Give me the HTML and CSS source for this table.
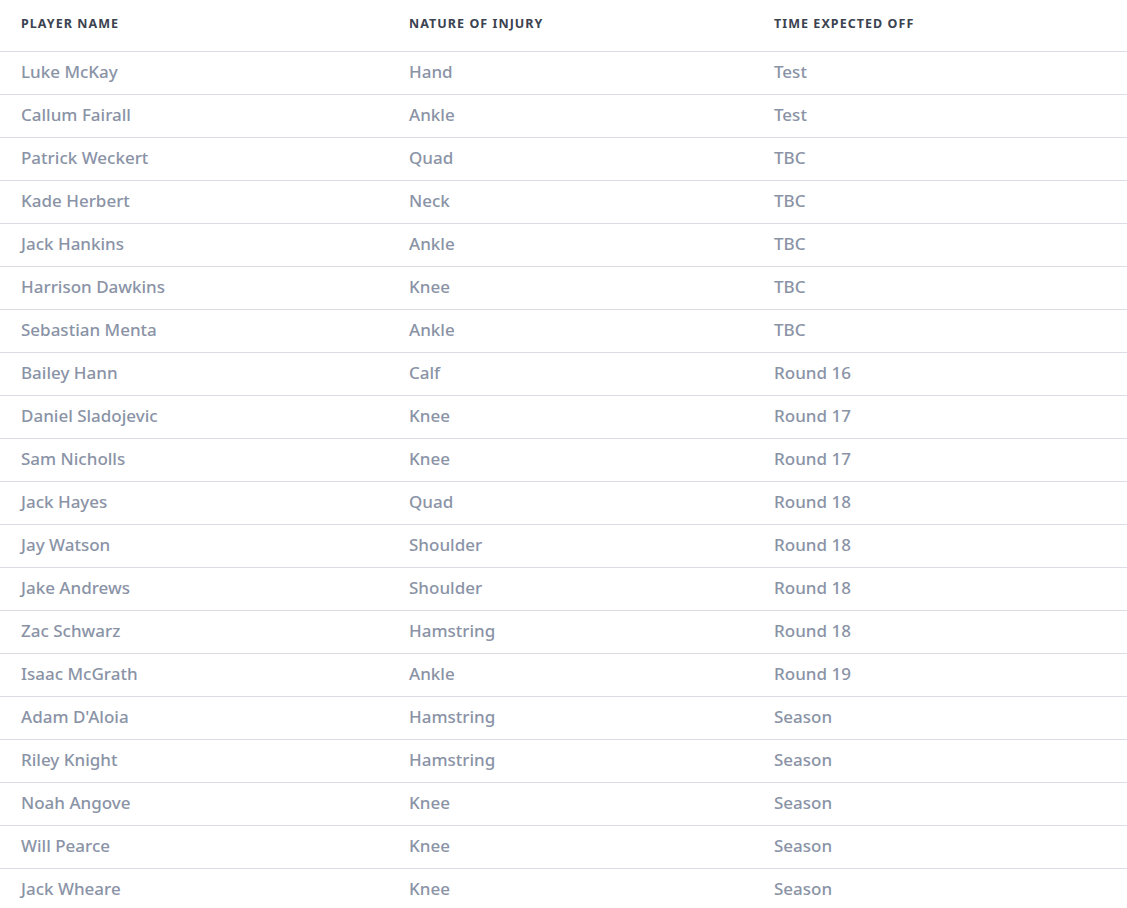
FILE: index.html
```html
<!DOCTYPE html>
<html>
<head>
<meta charset="utf-8">
<link rel="stylesheet" href="styles.css">
</head>
<body>
<div class="injury-table">
  <div class="row head">
    <div class="cell">Player Name</div>
    <div class="cell">Nature of Injury</div>
    <div class="cell">Time Expected Off</div>
  </div>
  <div class="row"><div class="cell">Luke McKay</div><div class="cell">Hand</div><div class="cell">Test</div></div>
  <div class="row"><div class="cell">Callum Fairall</div><div class="cell">Ankle</div><div class="cell">Test</div></div>
  <div class="row"><div class="cell">Patrick Weckert</div><div class="cell">Quad</div><div class="cell">TBC</div></div>
  <div class="row"><div class="cell">Kade Herbert</div><div class="cell">Neck</div><div class="cell">TBC</div></div>
  <div class="row"><div class="cell">Jack Hankins</div><div class="cell">Ankle</div><div class="cell">TBC</div></div>
  <div class="row"><div class="cell">Harrison Dawkins</div><div class="cell">Knee</div><div class="cell">TBC</div></div>
  <div class="row"><div class="cell">Sebastian Menta</div><div class="cell">Ankle</div><div class="cell">TBC</div></div>
  <div class="row"><div class="cell">Bailey Hann</div><div class="cell">Calf</div><div class="cell">Round 16</div></div>
  <div class="row"><div class="cell">Daniel Sladojevic</div><div class="cell">Knee</div><div class="cell">Round 17</div></div>
  <div class="row"><div class="cell">Sam Nicholls</div><div class="cell">Knee</div><div class="cell">Round 17</div></div>
  <div class="row"><div class="cell">Jack Hayes</div><div class="cell">Quad</div><div class="cell">Round 18</div></div>
  <div class="row"><div class="cell">Jay Watson</div><div class="cell">Shoulder</div><div class="cell">Round 18</div></div>
  <div class="row"><div class="cell">Jake Andrews</div><div class="cell">Shoulder</div><div class="cell">Round 18</div></div>
  <div class="row"><div class="cell">Zac Schwarz</div><div class="cell">Hamstring</div><div class="cell">Round 18</div></div>
  <div class="row"><div class="cell">Isaac McGrath</div><div class="cell">Ankle</div><div class="cell">Round 19</div></div>
  <div class="row"><div class="cell">Adam D'Aloia</div><div class="cell">Hamstring</div><div class="cell">Season</div></div>
  <div class="row"><div class="cell">Riley Knight</div><div class="cell">Hamstring</div><div class="cell">Season</div></div>
  <div class="row"><div class="cell">Noah Angove</div><div class="cell">Knee</div><div class="cell">Season</div></div>
  <div class="row"><div class="cell">Will Pearce</div><div class="cell">Knee</div><div class="cell">Season</div></div>
  <div class="row"><div class="cell">Jack Wheare</div><div class="cell">Knee</div><div class="cell">Season</div></div>
</div>
</body>
</html>
```
FILE: styles.css
```css
html, body {
  margin: 0;
  padding: 0;
  background: #ffffff;
}
.injury-table {
  font-family: "Noto Sans", "Open Sans", sans-serif;
}
.row {
  display: grid;
  grid-template-columns: 388px 365px 1fr;
  height: 43px;
  align-items: center;
  border-bottom: 1px solid #dcdce5;
  box-sizing: border-box;
}
.row.head {
  height: 52px;
}
.cell {
  padding-left: 21px;
  padding-bottom: 4px;
  font-size: 17px;
  color: #8a93a6;
  font-weight: 500;
}
.head .cell {
  font-size: 12.5px;
  font-weight: 700;
  text-transform: uppercase;
  letter-spacing: 1.05px;
  color: #3b4250;
  padding-bottom: 4px;
}
```
